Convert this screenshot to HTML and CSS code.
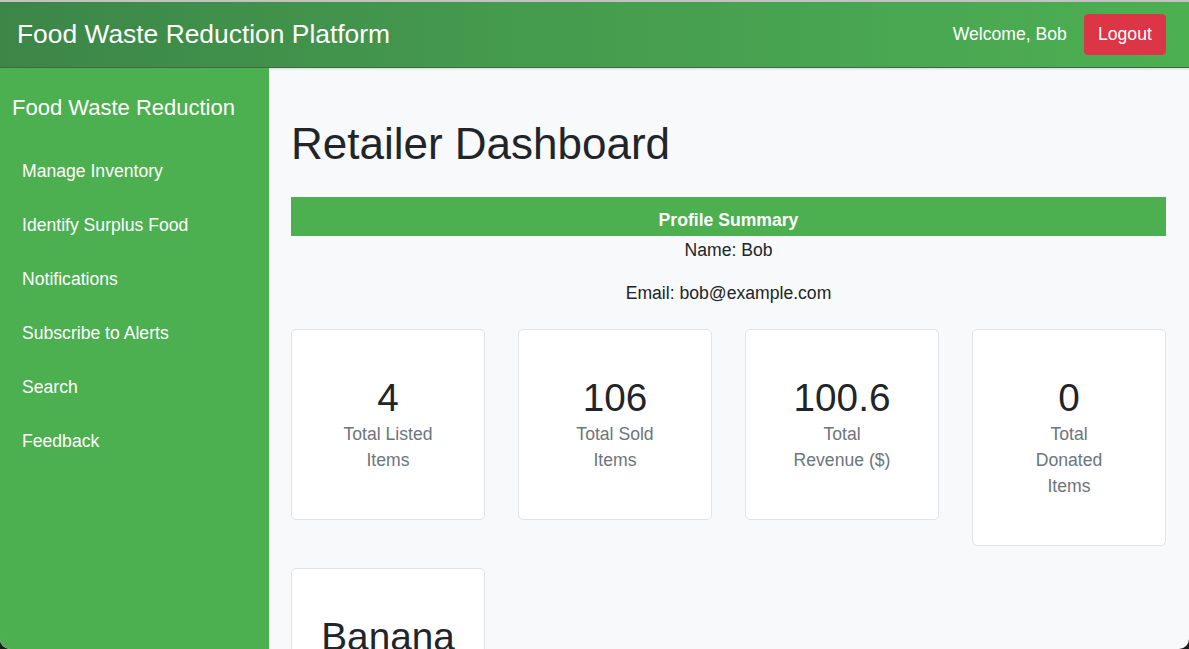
FILE: index.html
```html
<!DOCTYPE html>
<html lang="en">
<head>
<meta charset="utf-8">
<title>Retailer Dashboard</title>
<link rel="stylesheet" href="styles.css">
</head>
<body>
<div class="window">
  <header class="topbar">
    <div class="brand">Food Waste Reduction Platform</div>
    <div class="user">
      <span class="welcome">Welcome, Bob</span>
      <button class="btn-logout">Logout</button>
    </div>
  </header>
  <div class="layout">
    <nav class="sidebar">
      <div class="side-title">Food Waste Reduction</div>
      <a class="side-link" href="#">Manage Inventory</a>
      <a class="side-link" href="#">Identify Surplus Food</a>
      <a class="side-link" href="#">Notifications</a>
      <a class="side-link" href="#">Subscribe to Alerts</a>
      <a class="side-link" href="#">Search</a>
      <a class="side-link" href="#">Feedback</a>
    </nav>
    <main class="content">
      <h1 class="page-title">Retailer Dashboard</h1>
      <section class="profile">
        <div class="profile-head">Profile Summary</div>
        <p class="profile-line">Name: Bob</p>
        <p class="profile-line">Email: bob@example.com</p>
      </section>
      <div class="cards">
        <div class="card"><div class="card-num">4</div><div class="card-label">Total Listed Items</div></div>
        <div class="card"><div class="card-num">106</div><div class="card-label">Total Sold Items</div></div>
        <div class="card"><div class="card-num">100.6</div><div class="card-label">Total Revenue ($)</div></div>
        <div class="card"><div class="card-num">0</div><div class="card-label">Total Donated Items</div></div>
        <div class="card"><div class="card-num">Banana</div></div>
      </div>
    </main>
  </div>
</div>
</body>
</html>
```
FILE: styles.css
```css
html {
  background: #1c1c1c;
}
body {
  margin: 0;
  font-family: "Liberation Sans", Arial, Helvetica, sans-serif;
  font-size: 17.6px;
  line-height: 1.5;
  color: #212529;
}
.window {
  height: 649px;
  box-sizing: border-box;
  border-top: 2px solid #c2c2c2;
  border-radius: 0 0 10px 10px;
  overflow: hidden;
  background: #f8f9fa;
  display: flex;
  flex-direction: column;
}
.topbar {
  height: 66px;
  flex: none;
  box-sizing: border-box;
  display: flex;
  align-items: center;
  justify-content: space-between;
  padding: 0 23px 0 17px;
  background: linear-gradient(90deg, #3c8648 0%, #44994d 40%, #4aa852 80%, #4caf50 100%);
  border-bottom: 1px solid #3b6b40;
  box-shadow: 0 1px 2px rgba(0,0,0,0.15);
  color: #fff;
}
.brand {
  font-size: 26.4px;
  line-height: 1.2;
}
.user {
  display: flex;
  align-items: center;
  gap: 17px;
}
.welcome {
  font-size: 17.6px;
}
.btn-logout {
  font-family: inherit;
  font-size: 17.6px;
  line-height: 26.4px;
  color: #fff;
  background: #dc3545;
  border: 1px solid #dc3545;
  border-radius: 4px;
  padding: 6.6px 13.2px;
}
.layout {
  flex: 1;
  display: flex;
  min-height: 0;
}
.sidebar {
  width: 269px;
  flex: none;
  background: #4caf50;
  padding-top: 27px;
  box-sizing: border-box;
  display: flex;
  flex-direction: column;
}
.side-title {
  color: #fff;
  font-size: 22px;
  line-height: 26.4px;
  padding-left: 12px;
  margin-bottom: 23px;
}
.side-link {
  display: block;
  color: #fff;
  text-decoration: none;
  line-height: 26.4px;
  padding: 13.8px 22px;
}
.content {
  flex: 1;
  padding: 49px 23px 0 22px;
  min-width: 0;
}
.page-title {
  margin: 0 0 27px;
  font-size: 44px;
  font-weight: 400;
  line-height: 53px;
}
.profile {
  text-align: center;
}
.profile-head {
  background: #4caf50;
  color: #fff;
  font-weight: 700;
  height: 39px;
  line-height: 30px;
  box-sizing: border-box;
  padding-top: 8px;
}
.profile-line {
  margin: 0 0 17px;
  line-height: 26.4px;
}
.profile-line:first-of-type {
  margin-top: 1px;
}
.cards {
  margin-top: 22px;
  display: grid;
  grid-template-columns: repeat(4, minmax(0, 1fr));
  column-gap: 33px;
  row-gap: 22px;
  align-items: start;
}
.card {
  background: #fff;
  border: 1px solid #e1e3e6;
  border-radius: 5px;
  padding: 45px 46px 46px;
  display: flex;
  flex-direction: column;
  align-items: center;
  text-align: center;
}
.card-num {
  font-size: 38.7px;
  line-height: 46px;
  white-space: nowrap;
}
.card-label {
  color: #6c757d;
  line-height: 26px;
}
```
